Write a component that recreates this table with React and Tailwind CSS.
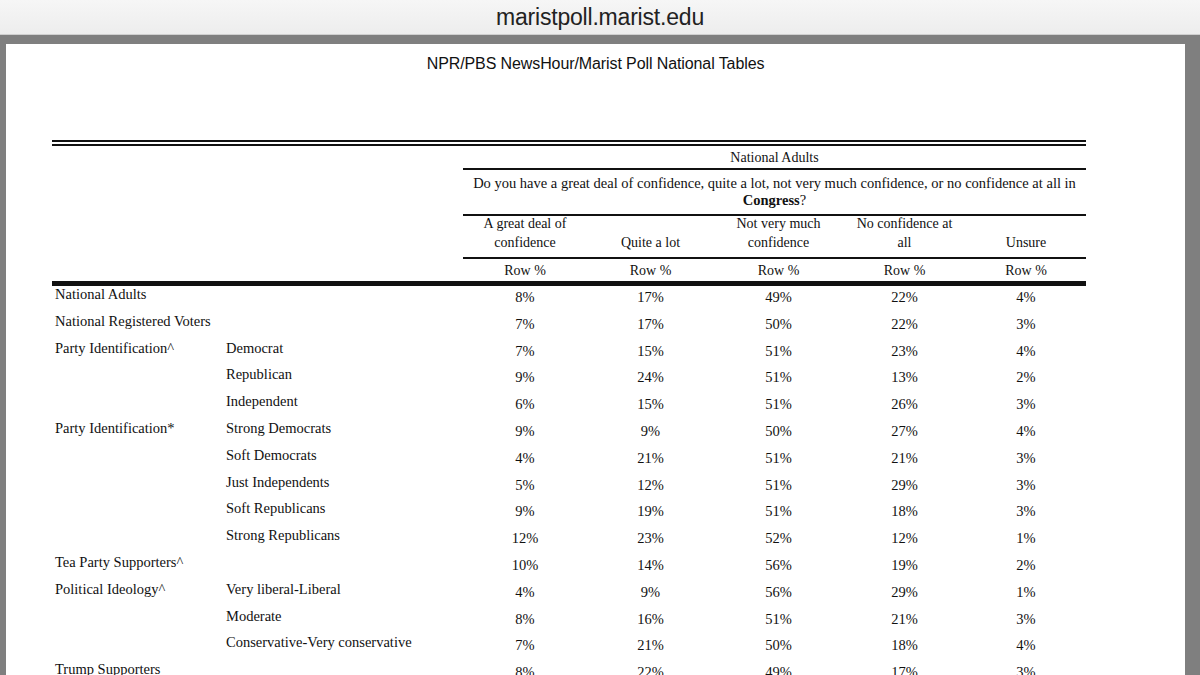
const rows = [
  ['National Adults', '', ['8%', '17%', '49%', '22%', '4%']],
  ['National Registered Voters', '', ['7%', '17%', '50%', '22%', '3%']],
  ['Party Identification^', 'Democrat', ['7%', '15%', '51%', '23%', '4%']],
  ['', 'Republican', ['9%', '24%', '51%', '13%', '2%']],
  ['', 'Independent', ['6%', '15%', '51%', '26%', '3%']],
  ['Party Identification*', 'Strong Democrats', ['9%', '9%', '50%', '27%', '4%']],
  ['', 'Soft Democrats', ['4%', '21%', '51%', '21%', '3%']],
  ['', 'Just Independents', ['5%', '12%', '51%', '29%', '3%']],
  ['', 'Soft Republicans', ['9%', '19%', '51%', '18%', '3%']],
  ['', 'Strong Republicans', ['12%', '23%', '52%', '12%', '1%']],
  ['Tea Party Supporters^', '', ['10%', '14%', '56%', '19%', '2%']],
  ['Political Ideology^', 'Very liberal-Liberal', ['4%', '9%', '56%', '29%', '1%']],
  ['', 'Moderate', ['8%', '16%', '51%', '21%', '3%']],
  ['', 'Conservative-Very conservative', ['7%', '21%', '50%', '18%', '4%']],
  ['Trump Supporters', '', ['8%', '22%', '49%', '17%', '3%']],
]

const grid = 'grid grid-cols-[174px_237px_124px_127px_129px_123px_120px]'
const cols = 'grid grid-cols-[124px_127px_129px_123px_120px]'

const App = () => {
  return (
    <div className="w-[1200px] h-[675px] overflow-hidden bg-[#7f7f7f] flex flex-col">
      {/* browser address bar */}
      <div className="h-[35px] shrink-0 bg-gradient-to-b from-[#f6f6f6] to-[#ededed] border-b border-[#cfcfcf] flex items-center justify-center">
        <span className="text-[23px] text-[#222] font-['Liberation_Sans',Arial,sans-serif] tracking-[-0.2px]">
          maristpoll.marist.edu
        </span>
      </div>

      <div className="flex-1 pl-[6px] pr-[15px] pt-[9px]">
        <div className="bg-white h-full font-['Liberation_Serif','Times_New_Roman',serif] text-[#111]">
          <div className="pt-[11px] text-center text-[16px] font-['Liberation_Sans',Arial,sans-serif] tracking-[-0.1px] leading-[18px]">
            NPR/PBS NewsHour/Marist Poll National Tables
          </div>

          <div className="ml-[46px] w-[1034px] mt-[67px]">
            {/* double rule */}
            <div className="h-[2px] bg-[#111]" />
            <div className="h-[2px]" />
            <div className="h-[2px] bg-[#111]" />

            <div className="ml-[411px] text-[14px]">
              <div className="h-[22px] flex items-center justify-center leading-[17px]">National Adults</div>
              <div className="h-[2px] bg-[#111]" />
              <div className="h-[44px] text-center text-[14.5px] leading-[17px] pt-[5px] whitespace-nowrap">
                Do you have a great deal of confidence, quite a lot, not very much confidence, or no confidence at all in
                <br />
                <b>Congress</b>?
              </div>
              <div className="h-[2px] bg-[#111]" />
              <div className={`${cols} h-[41px] text-center leading-[19px]`}>
                <div className="-mt-[2px]">A great deal of<br />confidence</div>
                <div className="flex items-end justify-center pb-[5px]">Quite a lot</div>
                <div className="-mt-[2px]">Not very much<br />confidence</div>
                <div className="-mt-[2px]">No confidence at<br />all</div>
                <div className="flex items-end justify-center pb-[5px]">Unsure</div>
              </div>
              <div className="h-[2px] bg-[#111]" />
              <div className={`${cols} h-[22px] text-center items-center`}>
                {['Row %', 'Row %', 'Row %', 'Row %', 'Row %'].map((t, i) => (
                  <div key={i}>{t}</div>
                ))}
              </div>
            </div>
            <div className="h-[5px] bg-[#111]" />

            {rows.map(([a, b, vals], i) => (
              <div key={i} className={`${grid} h-[26.8px] text-[14.5px] leading-[16px]`}>
                <div className="pl-[3px]">{a}</div>
                <div>{b}</div>
                {vals.map((v, j) => (
                  <div key={j} className="text-center pt-[3px]">{v}</div>
                ))}
              </div>
            ))}
          </div>
        </div>
      </div>
    </div>
  )
}

export default App
